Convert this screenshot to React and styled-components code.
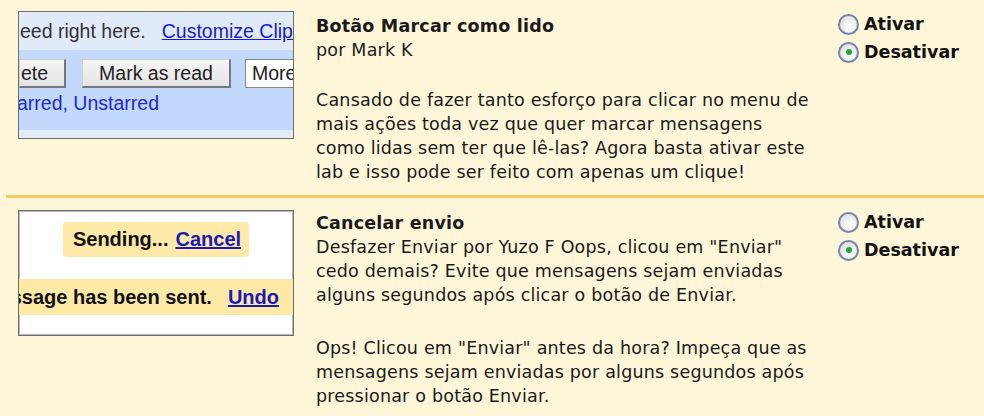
import React from "react";
import styled, { createGlobalStyle } from "styled-components";

const Global = createGlobalStyle`
  html, body { margin: 0; padding: 0; background: #fef6d8; }
  body { font-family: "Liberation Sans", Arial, sans-serif; }
`;

const Page = styled.div`
  width: 984px;
  height: 416px;
  overflow: hidden;
  background: #fef6d8;
`;

const Row = styled.div`
  display: grid;
  grid-template-columns: 276px 500px 1fr;
  column-gap: 22px;
  padding: ${(p) => p.$pad};
  margin-left: 18px;
`;

const Divider = styled.div`
  height: 3px;
  margin-left: 6px;
  background: #f6c965;
`;

const Shot = styled.div`
  height: ${(p) => p.$h}px;
  border: 1px solid #6f6f6f;
  box-shadow: inset 0 0 0 1px #b9b9b9;
  background: ${(p) => p.$bg};
  overflow: hidden;
  display: flex;
  flex-direction: column;
  font-family: "Liberation Sans", Arial, sans-serif;
  white-space: nowrap;
`;

const TopStrip = styled.div`
  height: 38px;
  background: #e1eaf9;
  display: flex;
  align-items: center;
  gap: 16px;
  font-size: 19.5px;
  color: #333;
  padding-left: 1px;
`;

const Link = styled.span`
  color: ${(p) => p.$c || "#1a1ad0"};
  text-decoration: underline;
  font-weight: ${(p) => (p.$bold ? 700 : 400)};
`;

const BlueBand = styled.div`
  flex: 1;
  background: #c3d8fd;
  display: flex;
  flex-direction: column;
  padding-top: 9px;
`;

const Buttons = styled.div`
  display: flex;
  gap: 16px;
  height: 29px;
`;

const Btn = styled.div`
  height: 29px;
  box-sizing: border-box;
  padding: ${(p) => p.$pad};
  margin-left: ${(p) => p.$ml || 0}px;
  display: flex;
  align-items: center;
  font-size: 19.5px;
  color: #222;
  background: ${(p) => (p.$white ? "#ffffff" : "linear-gradient(#f5f5f5, #e4e4e4)")};
  border: 1px solid #d0d0d0;
  border-right: 2px solid #777;
  border-bottom: 2px solid #777;
  ${(p) => p.$white && "border: 1px solid #888;"}
`;

const Labels = styled.div`
  color: #1a2ad0;
  font-size: 19.5px;
  margin-top: 4px;
  margin-left: -2px;
`;

const BottomStrip = styled.div`
  height: 8px;
  background: #e3ebf9;
`;

const SendingWrap = styled.div`
  display: flex;
  justify-content: center;
  padding-top: 11px;
`;

const Pill = styled.div`
  background: #fde9a8;
  border-radius: 4px;
  height: 35px;
  padding: 0 8px 0 10px;
  display: flex;
  align-items: center;
  gap: 7px;
  font-weight: 700;
  font-size: 20px;
  color: #111;
`;

const Banner = styled.div`
  margin-top: 22px;
  height: 36px;
  background: #fce9a6;
  display: flex;
  align-items: center;
  justify-content: flex-end;
  gap: 16px;
  padding-right: 14px;
  font-weight: 700;
  font-size: 20px;
  color: #111;
`;

const Text = styled.div`
  font-family: Tahoma, "DejaVu Sans", "Liberation Sans", sans-serif;
  font-size: 17.5px;
  line-height: 24px;
  letter-spacing: 0.2px;
  color: #1a1a1a;
  white-space: nowrap;
  padding-top: ${(p) => p.$pt || 0}px;
`;

const Title = styled.div`
  font-weight: 700;
`;

const Para = styled.p`
  margin: ${(p) => p.$mt || 0}px 0 0 0;
`;

const Options = styled.div`
  display: flex;
  flex-direction: column;
  gap: 6px;
  padding-top: ${(p) => p.$pt}px;
`;

const Option = styled.label`
  display: flex;
  align-items: center;
  gap: 5px;
  font-family: Tahoma, "DejaVu Sans", sans-serif;
  font-weight: 700;
  font-size: 17.5px;
  color: #111;
  height: 22px;
`;

const Radio = styled.span`
  width: 17px;
  height: 17px;
  border-radius: 50%;
  border: 2px solid #7388a6;
  background: radial-gradient(circle at 60% 65%, #ffffff 0%, #e2e2e2 75%);
  display: flex;
  align-items: center;
  justify-content: center;
  flex: none;
  &::after {
    content: "";
    width: 6px;
    height: 6px;
    border-radius: 50%;
    background: ${(p) => (p.$on ? "#21a734" : "transparent")};
  }
`;

const Opts = ({ on, pt }) => (
  <Options $pt={pt}>
    <Option><Radio $on={false} />Ativar</Option>
    <Option><Radio $on={on} />Desativar</Option>
  </Options>
);

export default function App() {
  return (
    <Page>
      <Global />
      <Row $pad="11px 0 11px 0">
        <Shot $h={126} $bg="#e3ebf9">
          <TopStrip>
            <span>eed right here.</span>
            <Link>Customize Clips</Link>
          </TopStrip>
          <BlueBand>
            <Buttons>
              <Btn $pad="0 16px 0 1px">ete</Btn>
              <Btn $pad="0 16px">Mark as read</Btn>
              <Btn $pad="0 6px" $white $ml={-2}>More actions</Btn>
            </Buttons>
            <Labels>arred, Unstarred</Labels>
          </BlueBand>
          <BottomStrip />
        </Shot>
        <Text $pt={3}>
          <Title>Botão Marcar como lido</Title>
          <div>por Mark K</div>
          <Para $mt={26}>
            Cansado de fazer tanto esforço para clicar no menu de<br />
            mais ações toda vez que quer marcar mensagens<br />
            como lidas sem ter que lê-las? Agora basta ativar este<br />
            lab e isso pode ser feito com apenas um clique!
          </Para>
        </Text>
        <Opts on pt={2} />
      </Row>
      <Divider />
      <Row $pad="12px 0 0 0">
        <Shot $h={124} $bg="#ffffff">
          <SendingWrap>
            <Pill>
              <span>Sending...</span>
              <Link $c="#1a1ab8" $bold>Cancel</Link>
            </Pill>
          </SendingWrap>
          <Banner>
            <span>Message has been sent.</span>
            <Link $c="#1a1ab8" $bold>Undo</Link>
          </Banner>
        </Shot>
        <Text $pt={1}>
          <Title>Cancelar envio</Title>
          <div>
            Desfazer Enviar por Yuzo F Oops, clicou em "Enviar"<br />
            cedo demais? Evite que mensagens sejam enviadas<br />
            alguns segundos após clicar o botão de Enviar.
          </div>
          <Para $mt={29}>
            Ops! Clicou em "Enviar" antes da hora? Impeça que as<br />
            mensagens sejam enviadas por alguns segundos após<br />
            pressionar o botão Enviar.
          </Para>
        </Text>
        <Opts on pt={1} />
      </Row>
    </Page>
  );
}
